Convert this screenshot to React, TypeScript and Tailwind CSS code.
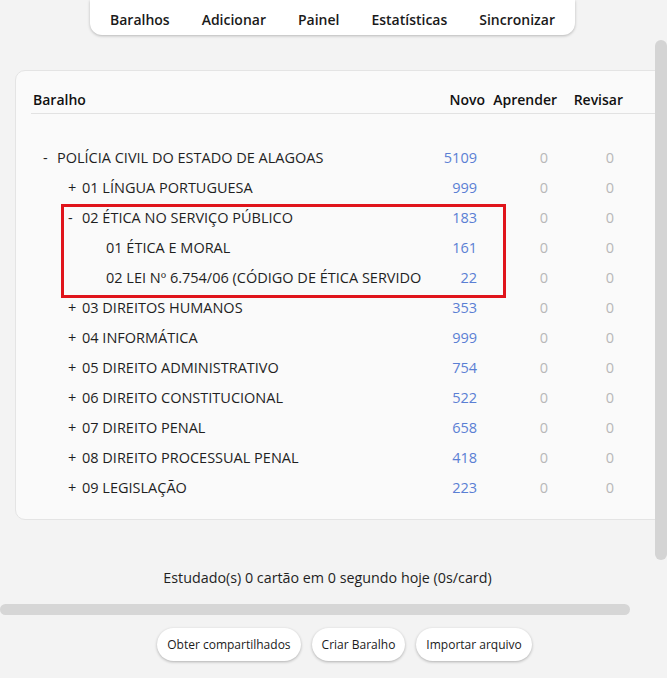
import React from "react";

type Deck = { name: string; level: number; sign: "-" | "+" | ""; novo: number };

const decks: Deck[] = [
  { name: "POLÍCIA CIVIL DO ESTADO DE ALAGOAS", level: 0, sign: "-", novo: 5109 },
  { name: "01 LÍNGUA PORTUGUESA", level: 1, sign: "+", novo: 999 },
  { name: "02 ÉTICA NO SERVIÇO PÚBLICO", level: 1, sign: "-", novo: 183 },
  { name: "01 ÉTICA E MORAL", level: 2, sign: "", novo: 161 },
  { name: "02 LEI Nº 6.754/06 (CÓDIGO DE ÉTICA SERVIDO", level: 2, sign: "", novo: 22 },
  { name: "03 DIREITOS HUMANOS", level: 1, sign: "+", novo: 353 },
  { name: "04 INFORMÁTICA", level: 1, sign: "+", novo: 999 },
  { name: "05 DIREITO ADMINISTRATIVO", level: 1, sign: "+", novo: 754 },
  { name: "06 DIREITO CONSTITUCIONAL", level: 1, sign: "+", novo: 522 },
  { name: "07 DIREITO PENAL", level: 1, sign: "+", novo: 658 },
  { name: "08 DIREITO PROCESSUAL PENAL", level: 1, sign: "+", novo: 418 },
  { name: "09 LEGISLAÇÃO", level: 1, sign: "+", novo: 223 },
];

const indent = ["pl-[12px]", "pl-[37px]", "pl-[75px]"];

function DeckRow({ deck }: { deck: Deck }) {
  return (
    <div className="flex h-[30px] items-center text-[14.5px] text-[#1f1f1f]">
      <div className={`flex w-[407px] items-center ${indent[deck.level]}`}>
        {deck.sign && <span className="w-[14px]">{deck.sign}</span>}
        <span className="whitespace-nowrap">{deck.name}</span>
      </div>
      <div className="w-[39px] text-right text-[#5a7fd4]">{deck.novo}</div>
      <div className="w-[71px] text-right text-[#b8b8b8]">0</div>
      <div className="w-[66px] text-right text-[#b8b8b8]">0</div>
    </div>
  );
}

function Toolbar() {
  const items = ["Baralhos", "Adicionar", "Painel", "Estatísticas", "Sincronizar"];
  return (
    <div className="flex justify-center pl-[10px]">
      <nav className="flex h-[35px] w-[485px] items-center justify-between rounded-b-[12px] bg-white px-[20px] pt-[3px] shadow-[0_1px_3px_rgba(0,0,0,0.25)]">
        {items.map((item) => (
          <span key={item} className="text-[14px] font-semibold text-[#1a1a1a]">
            {item}
          </span>
        ))}
      </nav>
    </div>
  );
}

export default function App() {
  return (
    <div
      className="flex h-[678px] w-[667px] overflow-hidden bg-[#f3f3f3]"
      style={{ fontFamily: '"Open Sans", "Noto Sans", sans-serif' }}
    >
      <main className="flex w-[655px] flex-col overflow-hidden">
        <Toolbar />

        <section className="ml-[15px] mt-[35px] w-[700px] shrink-0 rounded-[10px] border border-[#e4e4e4] bg-[#fafafa] pb-[16px] pl-[15px] pt-[18px]">
          <div className="flex h-[25px] items-start border-b border-[#e2e2e2] text-[14px] font-semibold leading-[21px] text-[#111]">
            <div className="w-[407px] pl-[2px]">Baralho</div>
            <div className="w-[47px] text-right">Novo</div>
            <div className="w-[72px] text-right">Aprender</div>
            <div className="w-[66px] text-right">Revisar</div>
          </div>
          <div className="relative mt-[29px]">
            {decks.map((d) => (
              <DeckRow key={d.name} deck={d} />
            ))}
            <div className="pointer-events-none absolute left-[30px] top-[61px] h-[94px] w-[445px] border-[3px] border-[#e0141b]" />
          </div>
        </section>

        <p className="mt-[48px] text-center text-[14.3px] leading-[20px] text-[#1f1f1f]">
          Estudado(s) 0 cartão em 0 segundo hoje (0s/card)
        </p>

        <div className="mt-[16px] h-[11px] w-[630px] shrink-0 rounded-full bg-[#d6d6d6]" />

        <div className="mt-[13px] flex justify-center gap-[11px] pl-[34px]">
          {["Obter compartilhados", "Criar Baralho", "Importar arquivo"].map((b) => (
            <button
              key={b}
              className="h-[33px] rounded-full bg-white px-[10px] text-[12px] text-[#1a1a1a] shadow-[0_1px_3px_rgba(0,0,0,0.28)]"
            >
              {b}
            </button>
          ))}
        </div>
      </main>

      <aside className="flex w-[12px] flex-col pt-[40px]">
        <div className="h-[520px] w-[12px] rounded-full bg-[#d4d4d4]" />
      </aside>
    </div>
  );
}
